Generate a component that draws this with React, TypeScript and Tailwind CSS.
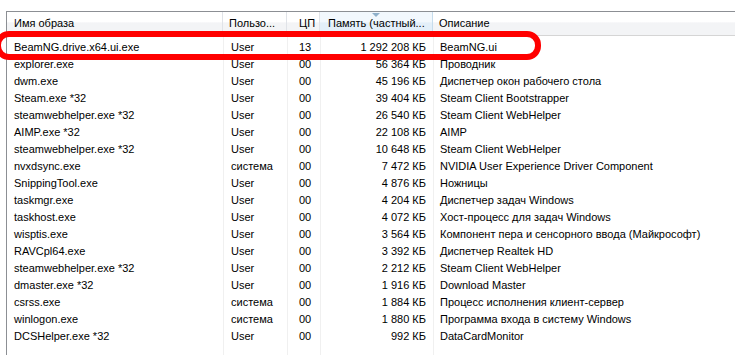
import React from 'react';

const rows: [string, string, string, string, string][] = [
  ['BeamNG.drive.x64.ui.exe', 'User', '13', '1 292 208 КБ', 'BeamNG.ui'],
  ['explorer.exe', 'User', '00', '56 364 КБ', 'Проводник'],
  ['dwm.exe', 'User', '00', '45 196 КБ', 'Диспетчер окон рабочего стола'],
  ['Steam.exe *32', 'User', '00', '39 404 КБ', 'Steam Client Bootstrapper'],
  ['steamwebhelper.exe *32', 'User', '00', '26 540 КБ', 'Steam Client WebHelper'],
  ['AIMP.exe *32', 'User', '00', '22 108 КБ', 'AIMP'],
  ['steamwebhelper.exe *32', 'User', '00', '10 648 КБ', 'Steam Client WebHelper'],
  ['nvxdsync.exe', 'система', '00', '7 472 КБ', 'NVIDIA User Experience Driver Component'],
  ['SnippingTool.exe', 'User', '00', '4 876 КБ', 'Ножницы'],
  ['taskmgr.exe', 'User', '00', '4 204 КБ', 'Диспетчер задач Windows'],
  ['taskhost.exe', 'User', '00', '4 072 КБ', 'Хост-процесс для задач Windows'],
  ['wisptis.exe', 'User', '00', '3 564 КБ', 'Компонент пера и сенсорного ввода (Майкрософт)'],
  ['RAVCpl64.exe', 'User', '00', '3 392 КБ', 'Диспетчер Realtek HD'],
  ['steamwebhelper.exe *32', 'User', '00', '2 212 КБ', 'Steam Client WebHelper'],
  ['dmaster.exe *32', 'User', '00', '1 916 КБ', 'Download Master'],
  ['csrss.exe', 'система', '00', '1 884 КБ', 'Процесс исполнения клиент-сервер'],
  ['winlogon.exe', 'система', '00', '1 880 КБ', 'Программа входа в систему Windows'],
  ['DCSHelper.exe *32', 'User', '00', '992 КБ', 'DataCardMonitor'],
];

const font = { fontFamily: '"Liberation Sans", Arial, sans-serif' };

export default function App() {
  return (
    <div className="relative w-[735px] h-[355px] bg-white overflow-hidden text-[11px] text-black" style={font}>
      <div className="pt-[11px] pl-[6px]">
        <div className="border-l border-t border-[#8c8f94] h-[344px] flex flex-col">
          {/* header */}
          <div className="flex h-[24px] border-b border-[#d5d5d5] bg-[linear-gradient(to_bottom,#ffffff_0%,#ffffff_45%,#f3f4f6_46%,#f3f4f6_100%)] leading-[23px]">
            <div className="w-[216px] pl-[7px] border-r border-[#e0e3e8]">Имя образа</div>
            <div className="w-[64px] pl-[6px] border-r border-[#e0e3e8]">Пользо...</div>
            <div className="w-[33px] pl-[12px] border-r border-[#e0e3e8]">ЦП</div>
            <div className="relative w-[113px] pl-[8px] border-r border-[#c6dcec] bg-[linear-gradient(to_bottom,#f2f8fd_0%,#f2f8fd_45%,#e3eff9_46%,#e3eff9_100%)]">
              Память (частный...
              <div className="absolute left-[52px] top-[1px] w-0 h-0 border-l-[4px] border-r-[4px] border-t-[4px] border-l-transparent border-r-transparent border-t-[#8fb0ca]" />
            </div>
            <div className="flex-1 pl-[6px]">Описание</div>
          </div>
          {/* body */}
          <div className="relative flex-1 pt-[3px]">
            <div className="absolute inset-0 flex pointer-events-none">
              <div className="w-[217px] border-r border-[#f0f0f0]" />
              <div className="w-[64px] border-r border-[#f0f0f0]" />
              <div className="w-[33px] border-r border-[#f0f0f0]" />
              <div className="w-[113px] border-r border-[#f0f0f0]" />
            </div>
            {rows.map((r, i) => (
              <div key={i} className="relative flex h-[17px] leading-[17px] whitespace-nowrap">
                <div className="w-[217px] pl-[7px]">{r[0]}</div>
                <div className="w-[64px] pl-[7px]">{r[1]}</div>
                <div className="w-[33px] pl-[11px]">{r[2]}</div>
                <div className="w-[113px] pr-[8px] text-right">{r[3]}</div>
                <div className="flex-1 pl-[6px]">{r[4]}</div>
              </div>
            ))}
          </div>
        </div>
      </div>
      {/* red annotation */}
      <div className="absolute left-[-5px] top-[31px] w-[546px] h-[29px] rounded-[14px] border-[6px] border-[#ff0000]" />
    </div>
  );
}
